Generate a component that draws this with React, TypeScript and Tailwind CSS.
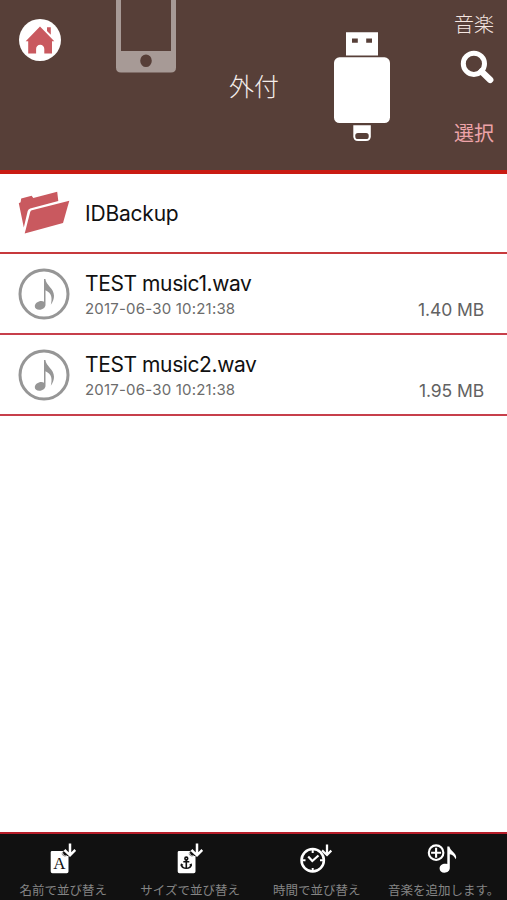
import type { ReactNode } from 'react';

type TFile = { name: string; date: string; size: string };

const files: TFile[] = [
  { name: 'TEST music1.wav', date: '2017-06-30 10:21:38', size: '1.40 MB' },
  { name: 'TEST music2.wav', date: '2017-06-30 10:21:38', size: '1.95 MB' },
];

const HomeIcon = () => (
  <svg viewBox="0 0 42 42" className="h-[42px] w-[42px]">
    <circle cx="21" cy="21" r="21" fill="#fff" />
    <path
      d="M21 7.5 35.3 22.3H33V34.5H25.3V30C25.3 27.6 23.5 25.8 21.2 25.8S17.1 27.6 17.1 30V34.5H9.2V22.3H6.7Z"
      fill="#c9595f"
    />
    <path d="M28 8.3h3.8v7.5L28 11.9z" fill="#c9595f" />
  </svg>
);

const PhoneIcon = () => (
  <svg viewBox="0 0 60 73" className="h-[73px] w-[60px]">
    <path
      d="M0 0H5V51H55V0H60V67.5Q60 72.5 55 72.5H5Q0 72.5 0 67.5ZM30 54.5A5.8 6.3 0 1 0 30 67.1A5.8 6.3 0 1 0 30 54.5Z"
      fill="#a79a96"
      fillRule="evenodd"
    />
  </svg>
);

const UsbIcon = () => (
  <svg viewBox="0 0 56 109" className="h-[109px] w-14">
    <path d="M12 .3H44V23.5H12ZM18 6.5V10.8H23.8V6.5ZM32.2 6.5V10.8H38V6.5Z" fill="#fff" fillRule="evenodd" />
    <rect x="0" y="25.3" width="56" height="65.7" rx="5.5" fill="#fff" />
    <path d="M19.3 93.2H36.8V104.2Q36.8 109 32 109H24Q19.3 109 19.3 104.2Z" fill="#fff" />
    <rect x="21.3" y="101" width="13.4" height="6" rx="2.6" fill="#573f38" />
  </svg>
);

const SearchIcon = () => (
  <svg viewBox="0 0 34 34" className="h-[34px] w-[34px]" fill="none" stroke="#fff">
    <circle cx="13.9" cy="13.8" r="10.6" strokeWidth="5" />
    <path d="M21.5 21.5 30.2 29.9" strokeWidth="6.4" strokeLinecap="round" />
  </svg>
);

const FolderIcon = () => (
  <svg viewBox="0 0 52 46" className="h-[46px] w-[52px]" fill="#c9595f">
    <path d="M.8 13.2 2.6 12.2 3.2 8.6 13.6 5.7 15.3 8 39.2 1.8 40.3 11 12.2 18.6Q10.3 19.3 9.7 21L5.8 37.5Z" />
    <path d="M12.2 21.9Q12.7 20.6 13.9 20.2L51.3 10.8 45 33 6.7 43.4Z" />
  </svg>
);

const MusicIcon = () => (
  <svg viewBox="0 0 52 52" className="h-[52px] w-[52px]">
    <circle cx="26" cy="26" r="24" fill="none" stroke="#969696" strokeWidth="3" />
    <path
      d="M26 11H27.4C28 17.3 36 20.2 36 27.8C36 30.8 35 34 32.8 36.7C34.5 30 33.8 25 27.5 22.2V36.8C27.5 39.3 25 41.8 21.3 41.8C18.7 41.8 16.8 40.3 16.8 38.2C16.8 35.3 20.2 33 23.3 33C24.4 33 25.4 33.3 26 33.8Z"
      fill="#969696"
    />
  </svg>
);

const SortArrow = () => (
  <path d="M22 1.5V12M16.5 8 22 13.3 27.3 8" fill="none" stroke="#fff" strokeWidth="2.5" />
);

// Sheet of paper with a curled corner, shared by the name and size icons
const Sheet = () => (
  <>
    <path d="M4 9H15.2Q14.2 13.6 18.5 14H20.5V29.5Q20.5 31.3 18.7 31.3H4.5Q2.7 31.3 2.7 29.5V10.3Q2.7 9 4 9Z" fill="#fff" />
    <path d="M17.3 8.5Q13.2 9.5 14.5 13Q16.5 15 19 13.5" fill="none" stroke="#999" />
  </>
);

const SortNameIcon = () => (
  <svg viewBox="0 0 28 32" className="-ml-0.5 h-8 w-7">
    <Sheet />
    <text x="11.3" y="27" textAnchor="middle" fontSize="17" fontFamily="Liberation Serif, serif" fill="#111">A</text>
    <SortArrow />
  </svg>
);

const SortSizeIcon = () => (
  <svg viewBox="0 0 28 32" className="-ml-0.5 h-8 w-7">
    <Sheet />
    <g fill="none" stroke="#111" strokeWidth="1.6">
      <circle cx="11.3" cy="16.5" r="1.4" />
      <path d="M11.3 18V26M8.3 19.7H14.3M6.3 22.3Q7 26.3 11.3 26.3T16.3 22.3" />
    </g>
    <path d="M5.5 24.3 6 21.3 8.5 23ZM17 24.3 16.6 21.3 14 23Z" fill="#111" />
    <SortArrow />
  </svg>
);

const SortTimeIcon = () => (
  <svg viewBox="0 0 32 32" className="-ml-0.5 h-8 w-8" fill="none" stroke="#fff">
    <circle cx="12.7" cy="18.3" r="11.2" strokeWidth="2.5" />
    <path d="M12.7 7V11M12.7 26V30M1.5 18.3H5.5M20 18.3H24" strokeWidth="2" />
    <path d="M8.2 14.5 12.3 19 18.5 13.5" strokeWidth="2.2" />
    <path d="M27 2.5V12.2M22 8.4 27 13 31.3 8.5" strokeWidth="2.3" />
  </svg>
);

const AddMusicIcon = () => (
  <svg viewBox="0 0 30 32" className="-ml-[3px] h-8 w-[30px]">
    <g fill="none" stroke="#fff" strokeWidth="2.1">
      <circle cx="9.1" cy="10.7" r="7.3" />
      <path d="M9.1 5.7V15.7M4.1 10.7H14.1" />
    </g>
    <path
      d="M20.3 4.5H22.3C23.2 9 29.4 11 29.2 15.5L28.6 17.3C27.3 14.3 25.5 12.8 22.8 12.3V26C22.8 28.7 20.5 30.7 17.4 30.7C14.6 30.7 12.6 29 12.6 26.5C12.6 23.2 16.3 20.9 20.3 22.1Z"
      fill="#fff"
    />
  </svg>
);

const FileRow = ({ file }: { file: TFile }) => {
  const { name, date, size } = file;
  return (
    <li className="flex h-[81px] items-start border-b-2 border-[#c73f4b] pl-[18px] pr-[23px] pt-[14px]">
      <MusicIcon />
      <div className="ml-[15px] mt-px flex-1">
        <p className="text-[21px] leading-[30px] tracking-[-0.4px] text-[#111]">{name}</p>
        <p className="text-[15px] leading-5 tracking-[0.2px] text-[#6c6c6c]">{date}</p>
      </div>
      <span className="mt-[30px] text-[17.5px] leading-6 tracking-[-0.1px] text-[#626262]">{size}</span>
    </li>
  );
};

const Tab = ({ label, children }: { label: string; children: ReactNode }) => (
  <button className="flex flex-1 flex-col items-center pt-2">
    {children}
    <span className="mt-2 whitespace-nowrap text-[12.5px] leading-[18px] text-[#858585]">{label}</span>
  </button>
);

export default function App() {
  return (
    <div className="flex h-[900px] w-[507px] flex-col overflow-hidden bg-white font-['Inter','Noto_Sans_CJK_JP',sans-serif]">
      {/* Header */}
      <header className="flex h-[174px] shrink-0 items-start border-b-4 border-[#c91b12] bg-[#573f38]">
        <div className="ml-[19px] mt-[19px]">
          <HomeIcon />
        </div>
        <div className="ml-[55px]">
          <PhoneIcon />
        </div>
        <h1 className="ml-[53px] mt-[69px] w-[50px] whitespace-nowrap text-[25px] font-light leading-9 text-[#f5eeeb]">外付</h1>
        <div className="ml-[55px] mt-8">
          <UsbIcon />
        </div>
        <div className="ml-auto mr-[13px] flex flex-col items-end">
          <span className="mt-2.5 text-[20px] font-light leading-[30px] text-[#f5e6e1]">音楽</span>
          <div className="mt-2.5">
            <SearchIcon />
          </div>
          <span className="mt-[35px] text-[20px] font-normal leading-[30px] text-[#eda3a8]">選択</span>
        </div>
      </header>

      {/* File list */}
      <ul className="flex-1">
        <li className="flex h-20 items-center border-b-2 border-[#c7393c] pl-[18px]">
          <FolderIcon />
          <span className="ml-[15px] mt-0.5 text-[21px] leading-[30px] tracking-[-0.2px] text-[#111]">IDBackup</span>
        </li>
        {files.map((file) => (
          <FileRow key={file.name} file={file} />
        ))}
      </ul>

      {/* Bottom toolbar */}
      <nav className="flex h-[68px] shrink-0 border-t-2 border-[#b61d29] bg-[#111]">
        <Tab label="名前で並び替え"><SortNameIcon /></Tab>
        <Tab label="サイズで並び替え"><SortSizeIcon /></Tab>
        <Tab label="時間で並び替え"><SortTimeIcon /></Tab>
        <Tab label="音楽を追加します。"><AddMusicIcon /></Tab>
      </nav>
    </div>
  );
}
